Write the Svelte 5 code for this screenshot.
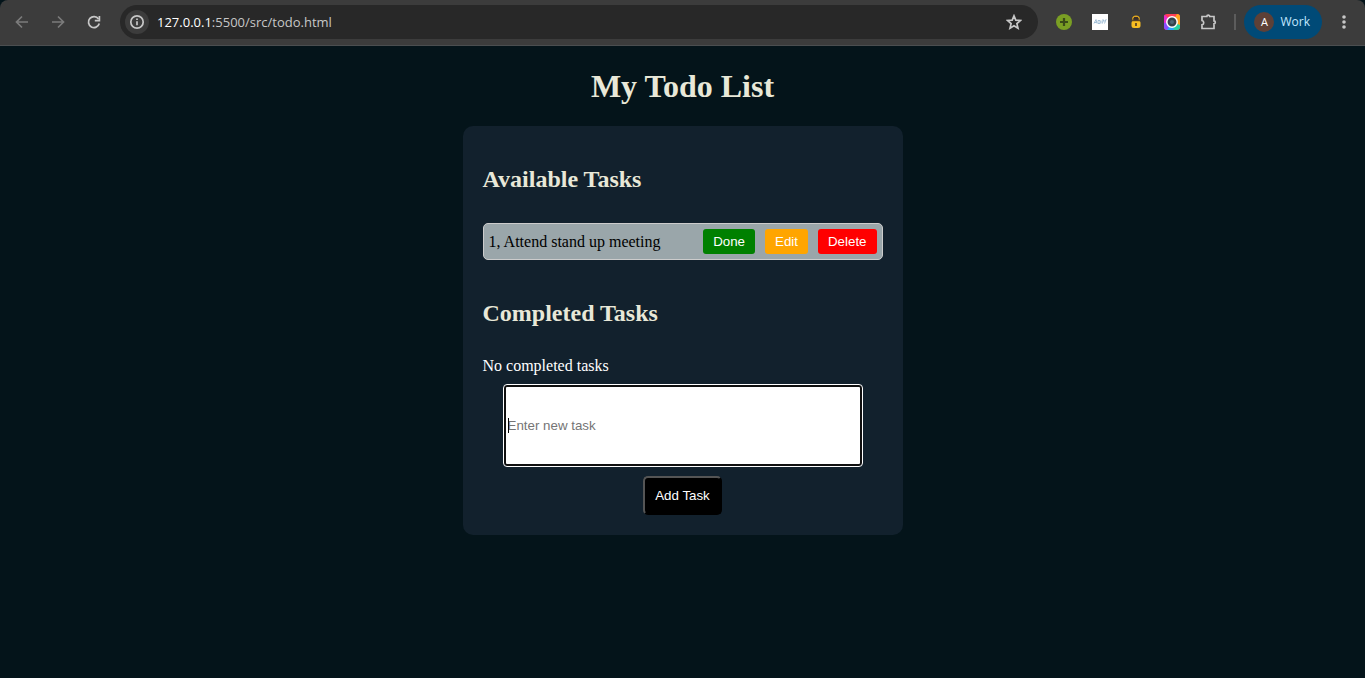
<script>
  let available = $state(['Attend stand up meeting']);
  let completed = $state([]);
  let draft = $state('');

  function addTask(event) {
    event.preventDefault();
    if (!draft.trim()) return;
    available.push(draft.trim());
    draft = '';
  }

  function finish(i) {
    completed.push(available[i]);
    available.splice(i, 1);
  }

  function edit(i) {
    draft = available[i];
    available.splice(i, 1);
  }
</script>

<div class="screen">
  <header class="toolbar">
    <nav class="history">
      <button class="icon faded" aria-label="Back">
        <svg width="16" height="16" viewBox="0 0 16 16"><path d="M14 8H3M8 2.500 2.500 8 8 13.500" /></svg>
      </button>
      <button class="icon faded" aria-label="Forward">
        <svg width="16" height="16" viewBox="0 0 16 16"><path d="M2 8h11M8 2.500 13.500 8 8 13.500" /></svg>
      </button>
      <button class="icon" aria-label="Reload">
        <svg width="16" height="16" viewBox="0 0 16 16"><path d="M13.300 9.500A5.500 5.500 0 1 1 12.500 4.900" /><path d="M13.400 2v4.600H8.800" /></svg>
      </button>
    </nav>

    <div class="address">
      <button class="info" aria-label="Site information">
        <svg width="16" height="16" viewBox="0 0 16 16"><circle cx="8" cy="8" r="6.200" /><path d="M8 7.200v4M8 4.500v1.500" /></svg>
      </button>
      <span class="url"><span class="host">127.0.0.1</span>:5500/src/todo.html</span>
      <button class="icon star" aria-label="Bookmark">
        <svg width="16" height="16" viewBox="0 0 16 16"><path d="m8 1.800 1.800 4.300 4.700.4-3.600 3.100 1.100 4.600L8 11.700l-4 2.500 1.100-4.600-3.600-3.100 4.700-.4z" /></svg>
      </button>
    </div>

    <div class="extensions">
      <svg width="16" height="16" viewBox="0 0 16 16"><circle cx="8" cy="8" r="8" fill="#7a9f24" /><path d="M8 4v8M4 8h8" stroke="#3a4b18" stroke-width="2.200" /></svg>
      <svg width="16" height="16" viewBox="0 0 16 16"><path fill="#fff" d="M0 0h16v16H0z" /><path d="m2 9.500 2-4 1 4M2.500 8.500h2M6 9.500v-3h2v3zM9 9.500v-3M10.500 9.500l.5-4 1 2 2-2-1.500 4" fill="none" stroke="#8fb2cf" stroke-width=".8" /></svg>
      <svg width="16" height="16" viewBox="0 0 16 16"><path d="M4.800 7V5.200a3.200 3 0 0 1 6.400 0V7" fill="none" stroke="#dfa61f" stroke-width="1.400" /><path d="M5.500 4.500 6.300 3h3.400l.8 1.500 1.500 1H4z" fill="#3a2d26" /><rect x="3.500" y="6.500" width="9" height="7.500" rx="2.500" fill="#f7bd22" /><path d="M4 6.700h8" stroke="#4b3622" /><path d="M8 9v3" stroke="#4b3622" stroke-width="1.600" /></svg>
      <svg width="16" height="16" viewBox="0 0 16 16">
        <defs><clipPath id="lens"><rect width="16" height="16" rx="3" /></clipPath></defs>
        <g clip-path="url(#lens)"><path fill="#ff3e55" d="M0 0h16v16H0z" /><path fill="#e82bd0" d="M8 8 0 0v10z" /><path fill="#8a4dff" d="M8 8 0 9v7h4z" /><path fill="#28a8ff" d="m8 8-5 8h8z" /><path fill="#27d3a2" d="m8 8 2 8h6v-6z" /><path fill="#ffa51f" d="m8 8 8 3V0h-3z" /></g>
        <circle cx="8" cy="8" r="5.200" fill="#35424b" stroke="#fff" stroke-width="1.500" /><circle cx="8" cy="8" r="2" fill="#4d6674" />
      </svg>
      <button class="icon" aria-label="Extensions">
        <svg width="18" height="18" viewBox="0 0 18 18"><path d="M2 3.500h4.800a1.500 1.300 0 0 1 3 0H14v4.300a1.300 1.500 0 0 1 0 3V15.500H2v-3.700a2.200 2.200 0 0 0 0-4.300z" /></svg>
      </button>
    </div>

    <div class="account">
      <button class="profile"><span class="avatar">A</span>Work</button>
      <button class="icon dots" aria-label="Menu">
        <svg width="16" height="16" viewBox="0 0 16 16"><circle cx="8" cy="3" r="1.800" /><circle cx="8" cy="8" r="1.800" /><circle cx="8" cy="13" r="1.800" /></svg>
      </button>
    </div>
  </header>

  <main>
    <h1>My Todo List</h1>
    <section class="card">
      <h2>Available Tasks</h2>
      <ul>
        {#each available as task, i}
          <li>
            <span class="name">{i + 1}, {task}</span>
            <button class="done" onclick={() => finish(i)}>Done</button>
            <button class="edit" onclick={() => edit(i)}>Edit</button>
            <button class="delete" onclick={() => available.splice(i, 1)}>Delete</button>
          </li>
        {/each}
      </ul>

      <h2>Completed Tasks</h2>
      {#if completed.length}
        <ul>
          {#each completed as task, i}
            <li><span class="name">{i + 1}, {task}</span></li>
          {/each}
        </ul>
      {:else}
        <p>No completed tasks</p>
      {/if}

      <form onsubmit={addTask}>
        <div class="entry">
          <input type="text" placeholder="Enter new task" aria-label="New task" bind:value={draft} />
        </div>
        <button class="add">Add Task</button>
      </form>
    </section>
  </main>
</div>

<style>
  :global(body) {
    margin: 0;
    background: #04141a;
  }

  .screen {
    min-height: 100vh;
    background: #04141a;
    font-family: "Liberation Serif", "Times New Roman", serif;
  }

  button {
    border: 0;
    cursor: pointer;
  }

  .toolbar {
    display: flex;
    align-items: center;
    box-sizing: border-box;
    height: 46px;
    padding: 0 13px 2px 14px;
    background: #3c3c3c;
    border-bottom: 1px solid #4b4e50;
    border-radius: 8px 8px 0 0;
    font-family: "Open Sans", "Noto Sans", sans-serif;
  }

  .history {
    display: flex;
    gap: 20px;
  }

  .icon,
  .info {
    display: flex;
    padding: 0;
    background: none;
  }

  .history .icon {
    width: 16px;
  }

  .icon svg,
  .info svg {
    fill: none;
    stroke: #c7c7c7;
    stroke-width: 1.7;
  }

  .icon.faded svg {
    stroke: #7b7b7b;
  }

  .address {
    display: flex;
    flex: 1;
    align-items: center;
    box-sizing: border-box;
    height: 34px;
    margin-left: 18px;
    padding: 0 16px 0 5px;
    border-radius: 17px;
    background: #282828;
  }

  .info {
    align-items: center;
    justify-content: center;
    width: 24px;
    height: 24px;
    border-radius: 50%;
    background: #3c3c3c;
  }

  .url {
    flex: 1;
    margin-left: 8px;
    color: #c7c7c7;
    font-size: 13px;
  }

  .host {
    color: #fff;
  }

  .extensions {
    display: flex;
    align-items: center;
    gap: 20px;
    margin-left: 18px;
  }

  .account {
    display: flex;
    align-items: center;
    gap: 14px;
    margin-left: 16px;
  }

  .account::before {
    content: "";
    width: 2px;
    height: 16px;
    margin-right: -6px;
    background: #5c5c5c;
  }

  .profile {
    display: flex;
    align-items: center;
    gap: 6px;
    height: 34px;
    padding: 0 12px 0 10px;
    border-radius: 17px;
    background: #004a77;
    color: #c2e7ff;
    font: 12px "Open Sans", "Noto Sans", sans-serif;
  }

  .avatar {
    width: 20px;
    border-radius: 50%;
    background: #5d4037;
    color: #fff;
    font-size: 11px;
    line-height: 20px;
    text-align: center;
  }

  .icon.dots svg {
    fill: #c7c7c7;
    stroke: none;
  }

  main {
    display: flex;
    flex-direction: column;
    align-items: center;
  }

  h1,
  h2 {
    color: #e8e8d8;
  }

  h1 {
    margin: 22px 0 21px;
    font-size: 32px;
    line-height: 37px;
  }

  h2 {
    margin: 20px 0;
    font-size: 24px;
    line-height: 27px;
  }

  .card {
    display: flow-root;
    box-sizing: border-box;
    width: 100%;
    max-width: 440px;
    padding: 20px;
    border-radius: 10px;
    background: #12212d;
  }

  ul {
    display: grid;
    gap: 10px;
    margin: 30px 0 40px;
    padding: 0;
    list-style: none;
  }

  li {
    display: flex;
    align-items: center;
    gap: 10px;
    padding: 5px;
    border: 1px solid #ccc;
    border-radius: 5px;
    background: #9aa6aa;
  }

  .name {
    flex: 1;
    font-size: 16px;
  }

  li button {
    height: 25px;
    padding: 0 10px;
    border-radius: 3px;
    color: #fff;
    font-family: "Liberation Sans", Arial, sans-serif;
  }

  .done {
    background: #008000;
  }

  .edit {
    background: #ffa500;
  }

  .delete {
    background: #f00;
  }

  p {
    margin: 30px 0 10px;
    color: #fff;
    font-size: 16px;
    line-height: 18px;
  }

  form {
    display: flex;
    flex-direction: column;
    align-items: center;
    gap: 10px;
  }

  .entry {
    position: relative;
    align-self: stretch;
    margin: 0 21px;
  }

  input {
    display: block;
    box-sizing: border-box;
    width: 100%;
    height: 81px;
    padding: 0 2px;
    border: 2px solid #101010;
    border-radius: 3px;
    outline: 1px solid #fff;
    background: #fff;
    font-family: "Liberation Sans", Arial, sans-serif;
  }

  input::placeholder {
    color: #757575;
  }

  /* text cursor resting at the start of the empty field */
  .entry:has(input:placeholder-shown)::after {
    content: "";
    position: absolute;
    top: 33px;
    left: 4px;
    width: 1px;
    height: 15px;
    background: #000;
  }

  .add {
    padding: 10px;
    border: 2px solid;
    border-color: #555 #000 #000 #555;
    border-radius: 5px;
    background: #000;
    color: #fff;
    font-family: "Liberation Sans", Arial, sans-serif;
  }
</style>
